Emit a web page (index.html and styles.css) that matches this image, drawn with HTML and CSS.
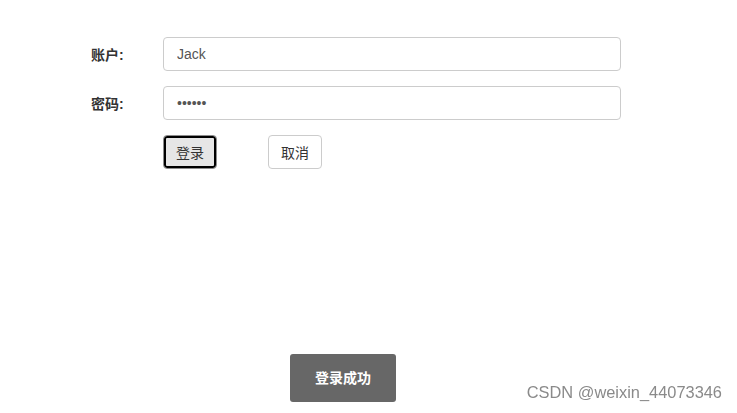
FILE: index.html
```html
<!DOCTYPE html>
<html>

<head>
    <title>登录</title>
    <meta charset="UTF-8">
    <link rel="stylesheet" href="styles.css">
</head>

<body>
    <div class="container">
        <form id="login-form">
            <div class="form-group">
                <label for="account">账户:</label>
                <input type="text" id="account" class="form-control" value="Jack" />
            </div>
            <div class="form-group">
                <label for="password">密码:</label>
                <input type="password" id="password" class="form-control" value="123456" />
            </div>
            <div class="btn-row">
                <button type="submit" class="btn active">登录</button>
                <button type="button" class="btn">取消</button>
            </div>
        </form>
    </div>
    <div class="toast">登录成功</div>
    <div class="watermark">CSDN @weixin_44073346</div>
</body>

</html>
```
FILE: styles.css
```css
body {
    margin: 0;
    background-color: #fff;
    font-family: "Liberation Sans", "Noto Sans CJK SC", sans-serif;
    font-size: 14px;
    color: #333;
}

.container {
    padding: 37px 0 0 91px;
}

.form-group {
    display: flex;
    align-items: center;
    margin-bottom: 15px;
}

label {
    width: 72px;
    font-weight: bold;
    font-size: 14px;
    color: #333;
}

.form-control {
    box-sizing: border-box;
    width: 458px;
    height: 34px;
    padding: 6px 13px;
    font-family: "Liberation Sans", "Noto Sans CJK SC", sans-serif;
    font-size: 14px;
    color: #555;
    border: 1px solid #ccc;
    border-radius: 4px;
    outline: none;
}

.btn-row {
    display: flex;
    gap: 51px;
    margin-left: 72px;
}

.btn {
    box-sizing: border-box;
    width: 54px;
    height: 34px;
    padding: 0;
    font-family: "Liberation Sans", "Noto Sans CJK SC", sans-serif;
    font-size: 14px;
    color: #333;
    background-color: #fff;
    border: 1px solid #ccc;
    border-radius: 4px;
}

.btn.active {
    background-color: #e6e6e6;
    border-color: #8c8c8c;
    box-shadow: inset 0 0 0 2px #000;
}

.toast {
    position: fixed;
    left: 290px;
    top: 354px;
    width: 106px;
    height: 48px;
    line-height: 48px;
    text-align: center;
    background-color: #676767;
    color: #fff;
    font-weight: bold;
    font-size: 14px;
    border-radius: 3px;
}

.watermark {
    position: fixed;
    right: 15px;
    top: 383px;
    font-size: 16.4px;
    color: #8a8a8a;
    text-shadow: 0 0 1px #fff;
}
```
